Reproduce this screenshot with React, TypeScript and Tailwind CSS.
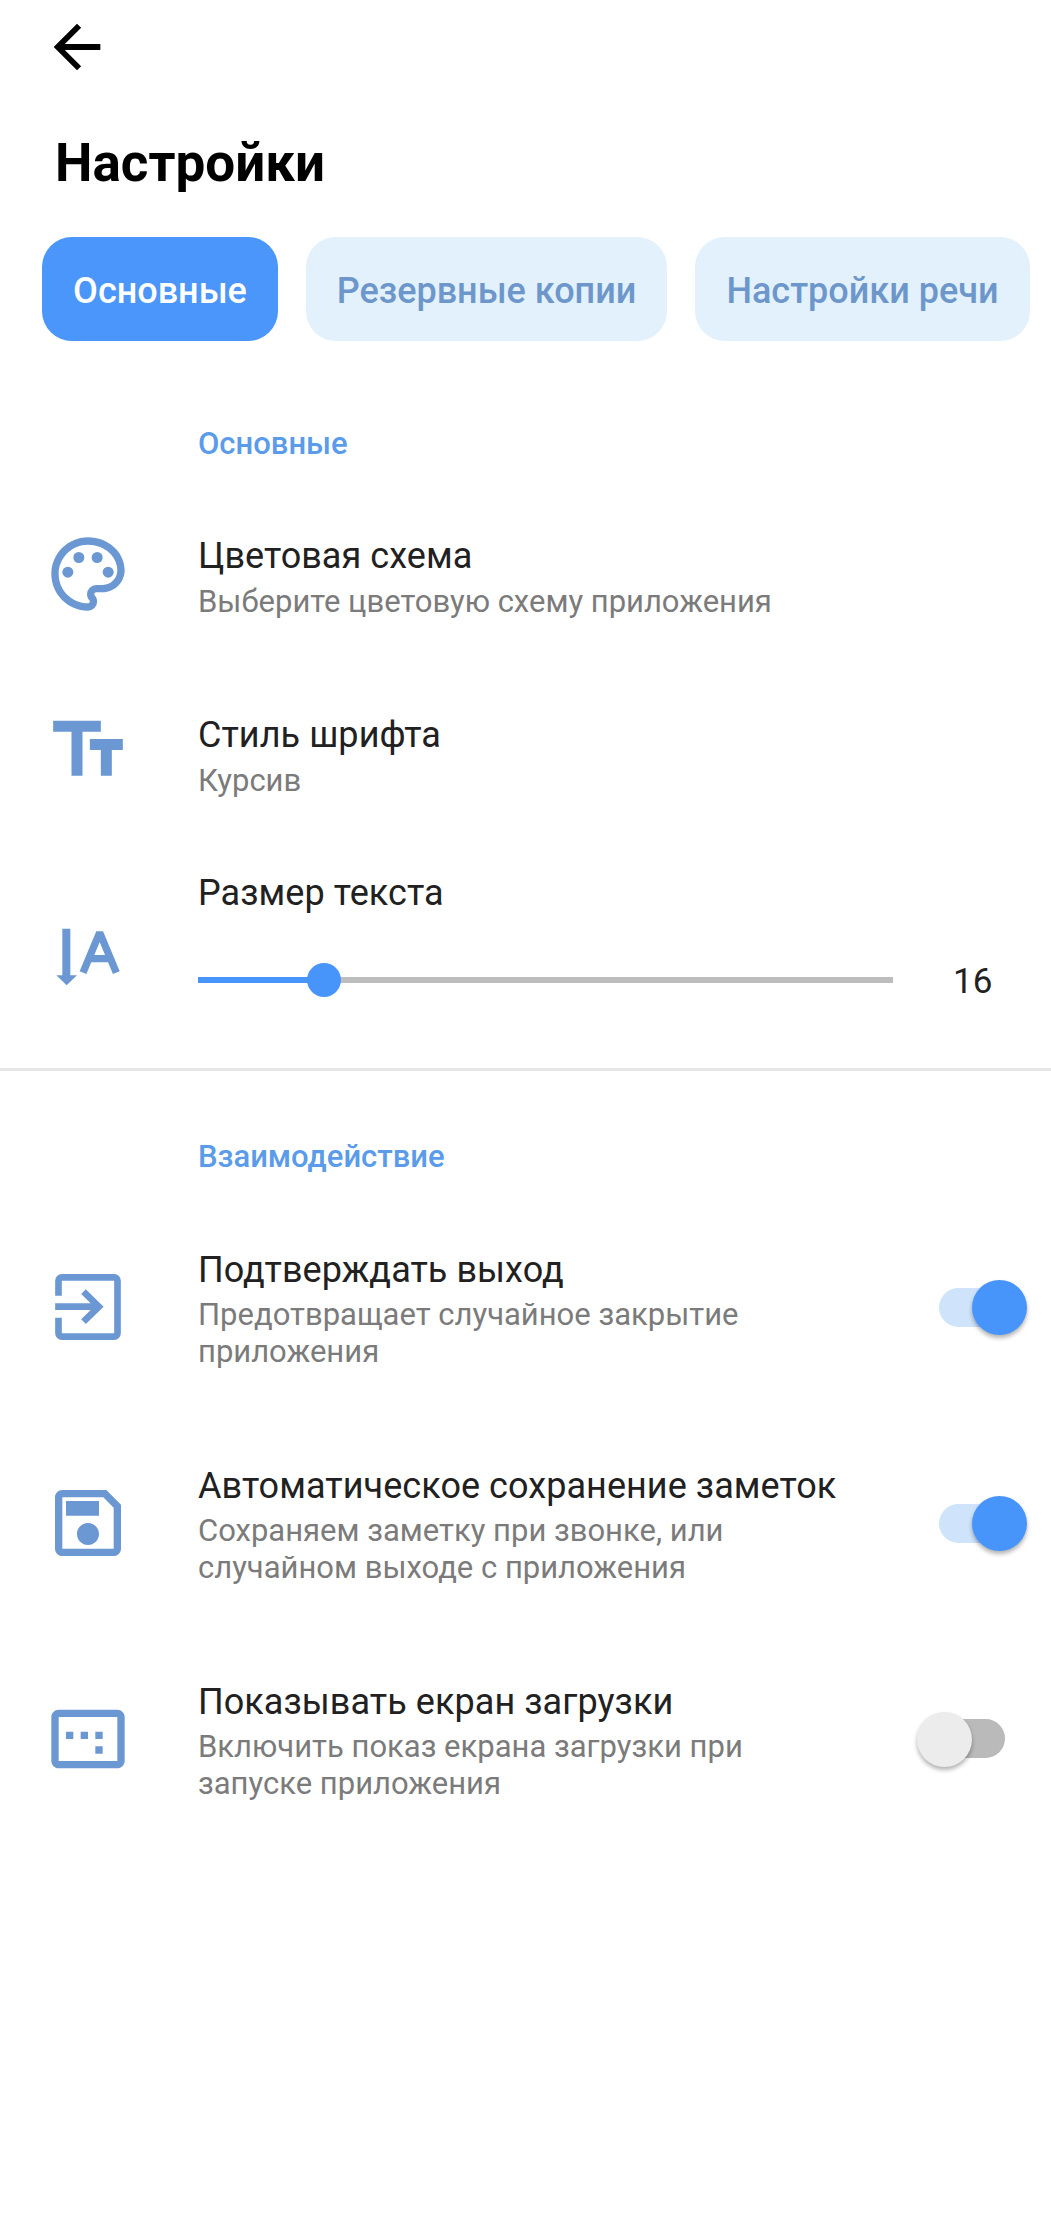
import React from "react";

const ICON = "#6b98d2";

const PaletteIcon = () => (
  <svg viewBox="0 0 24 24" className="w-[88px] h-[88px]" fill={ICON}>
    <path d="M12 22C6.49 22 2 17.51 2 12S6.49 2 12 2s10 4.04 10 9c0 3.31-2.69 6-6 6h-1.77c-.28 0-.5.22-.5.5 0 .12.05.23.13.33.41.47.64 1.06.64 1.67A2.5 2.5 0 0 1 12 22zm0-18c-4.41 0-8 3.59-8 8s3.59 8 8 8c.28 0 .5-.22.5-.5a.54.54 0 0 0-.14-.35c-.41-.46-.63-1.05-.63-1.65a2.5 2.5 0 0 1 2.5-2.5H16c2.21 0 4-1.79 4-4 0-3.86-3.59-7-8-7z" />
    <circle cx="6.5" cy="11.5" r="1.5" />
    <circle cx="9.5" cy="7.5" r="1.5" />
    <circle cx="14.5" cy="7.5" r="1.5" />
    <circle cx="17.5" cy="11.5" r="1.5" />
  </svg>
);

const FontIcon = () => (
  <svg viewBox="0 0 24 24" className="w-[88px] h-[88px]" fill={ICON}>
    <path d="M2.5 4v3h5v12h3V7h5V4h-13zm19 5h-9v3h3v7h3v-7h3V9z" />
  </svg>
);

// обведено по скриншоту, единицы = 1/3 px
const SizeIcon = () => (
  <svg viewBox="41 1203 264 264" className="w-[88px] h-[88px]" fill={ICON}>
    <path d="M96 1250h24v140h20l-31 30-31-30h18z" />
    <path d="M158 1382L208 1262L258 1382M176 1340H240" fill="none" stroke={ICON} strokeWidth="22" strokeLinejoin="bevel" />
  </svg>
);

const ExitIcon = () => (
  <svg viewBox="41.5 32 264 264" className="w-[88px] h-[88px]" fill="none" stroke={ICON} strokeWidth="20">
    <path d="M85 130V85a10 10 0 0 1 10-10h157a10 10 0 0 1 10 10v158a10 10 0 0 1-10 10H95a10 10 0 0 1-10-10v-47" />
    <path d="M75 163h130M160 118l46 45-46 45" />
  </svg>
);

const SaveIcon = () => (
  <svg viewBox="0 0 24 24" className="w-[88px] h-[88px]" fill={ICON}>
    <path d="M17 3H5c-1.11 0-2 .9-2 2v14c0 1.1.89 2 2 2h14c1.1 0 2-.9 2-2V7l-4-4zm2 16H5V5h11.17L19 7.83V19zm-7-7c-1.66 0-3 1.34-3 3s1.34 3 3 3 3-1.34 3-3-1.34-3-3-3zM6 6h9v4H6z" />
  </svg>
);

const ScreenIcon = () => (
  <svg viewBox="0 0 24 24" className="w-[88px] h-[88px]" fill={ICON}>
    <path d="M20 4H4c-1.1 0-2 .9-2 2v12c0 1.1.9 2 2 2h16c1.1 0 2-.9 2-2V6c0-1.1-.9-2-2-2zm0 14H4V6h16v12z" />
    <path d="M6 10h2v2H6zM10 10h2v2h-2zM14 10h2v2h-2zM14 14h2v2h-2z" />
  </svg>
);

const Switch = ({ on }: { on: boolean }) => (
  <div className="relative w-[110px] h-[55px] shrink-0">
    {on ? (
      <>
        <div className="absolute left-[22px] top-[8px] w-[75px] h-[39px] rounded-full bg-[#cfe3fb]" />
        <div className="absolute right-0 top-0 w-[55px] h-[55px] rounded-full bg-[#4795fb] shadow-[0_3px_4px_rgba(0,0,0,0.3)]" />
      </>
    ) : (
      <>
        <div className="absolute left-[13px] top-[7px] w-[75px] h-[39px] rounded-full bg-[#bababa]" />
        <div className="absolute left-0 top-0 w-[55px] h-[55px] rounded-full bg-[#ececec] shadow-[0_3px_4px_rgba(0,0,0,0.3)]" />
      </>
    )}
  </div>
);

const Title = ({ children }: { children: React.ReactNode }) => (
  <div className="text-[36px] leading-[42px] tracking-[0.06px] text-[#212121]">{children}</div>
);

const Sub = ({ children }: { children: React.ReactNode }) => (
  <div className="text-[31px] leading-[37px] text-[#7b7b7b]">{children}</div>
);

const SectionLabel = ({ children }: { children: React.ReactNode }) => (
  <div className="pl-[198px] text-[31px] leading-[36px] font-medium text-[#5a9bea]">{children}</div>
);

const Row = ({
  icon,
  title,
  sub,
  pt,
}: {
  icon: React.ReactNode;
  title: string;
  sub: string;
  pt: string;
}) => (
  <div className="flex items-center h-[176px]">
    <div className="w-[198px] pl-[44px] shrink-0 flex">{icon}</div>
    <div className={pt}>
      <Title>{title}</Title>
      <div className="mt-[6px]">
        <Sub>{sub}</Sub>
      </div>
    </div>
  </div>
);

const SwitchRow = ({
  icon,
  title,
  lines,
  on,
}: {
  icon: React.ReactNode;
  title: string;
  lines: string[];
  on: boolean;
}) => (
  <div className="flex items-center h-[216px] pr-[24px]">
    <div className="w-[198px] pl-[44px] shrink-0 flex">{icon}</div>
    <div className="flex-1 pt-[5px]">
      <Title>{title}</Title>
      <div className="mt-[5px]">
        {lines.map((l) => (
          <Sub key={l}>{l}</Sub>
        ))}
      </div>
    </div>
    <Switch on={on} />
  </div>
);

export default function App() {
  return (
    <div className="w-[1051px] h-[2230px] bg-white overflow-hidden font-['Roboto',sans-serif]">
      {/* шапка */}
      <div className="h-[94px] pl-[42px] pt-[12px]">
        <svg viewBox="0 0 24 24" className="w-[70px] h-[70px]" fill="#000">
          <path d="M20 11H7.83l5.59-5.59L12 4l-8 8 8 8 1.41-1.41L7.83 13H20v-2z" />
        </svg>
      </div>
      <div className="pl-[55px] h-[143px] pt-[41px] text-[53px] leading-[56px] font-bold text-black">Настройки</div>

      {/* вкладки */}
      <div className="flex gap-[28px] pl-[42px]">
        <div className="w-[236px] h-[104px] pt-[3px] rounded-[30px] bg-[#4a96fb] flex items-center justify-center text-[36px] font-medium text-white">
          Основные
        </div>
        <div className="w-[361px] h-[104px] pt-[3px] rounded-[30px] bg-[#e3f1fd] flex items-center justify-center text-[36px] font-medium text-[#6d97cb]">
          Резервные копии
        </div>
        <div className="w-[335px] h-[104px] pt-[3px] rounded-[30px] bg-[#e3f1fd] flex items-center justify-center text-[36px] font-medium text-[#6d97cb]">
          Настройки речи
        </div>
      </div>

      <div className="mt-[85px]">
        <SectionLabel>Основные</SectionLabel>
      </div>

      <div className="mt-[24px]">
        <Row icon={<PaletteIcon />} title="Цветовая схема" sub="Выберите цветовую схему приложения" pt="pt-[6px]" />
        <Row icon={<FontIcon />} title="Стиль шрифта" sub="Курсив" pt="pt-[12px]" />
      </div>

      {/* размер текста */}
      <div className="flex items-start h-[233px] border-b-[3px] border-[#e6e6e6]">
        <div className="w-[198px] pl-[44px] pt-[75px] shrink-0 flex">
          <SizeIcon />
        </div>
        <div className="flex-1 pt-[34px]">
          <Title>Размер текста</Title>
          <div className="flex items-center h-[42px] mt-[45px]">
            <div className="relative w-[695px] h-[6px] bg-[#bdbdbd]">
              <div className="absolute left-0 top-0 h-[6px] w-[126px] bg-[#4795fb]" />
              <div className="absolute left-[109px] -top-[14px] w-[34px] h-[34px] rounded-full bg-[#4795fb]" />
            </div>
            <div className="ml-[60px] mt-[5px] text-[35px] text-[#212121]">16</div>
          </div>
        </div>
      </div>

      <div className="mt-[68px]">
        <SectionLabel>Взаимодействие</SectionLabel>
      </div>

      <div className="mt-[24px]">
        <SwitchRow
          icon={<ExitIcon />}
          title="Подтверждать выход"
          lines={["Предотвращает случайное закрытие", "приложения"]}
          on
        />
        <SwitchRow
          icon={<SaveIcon />}
          title="Автоматическое сохранение заметок"
          lines={["Сохраняем заметку при звонке, или", "случайном выходе с приложения"]}
          on
        />
        <SwitchRow
          icon={<ScreenIcon />}
          title="Показывать екран загрузки"
          lines={["Включить показ екрана загрузки при", "запуске приложения"]}
          on={false}
        />
      </div>
    </div>
  );
}
